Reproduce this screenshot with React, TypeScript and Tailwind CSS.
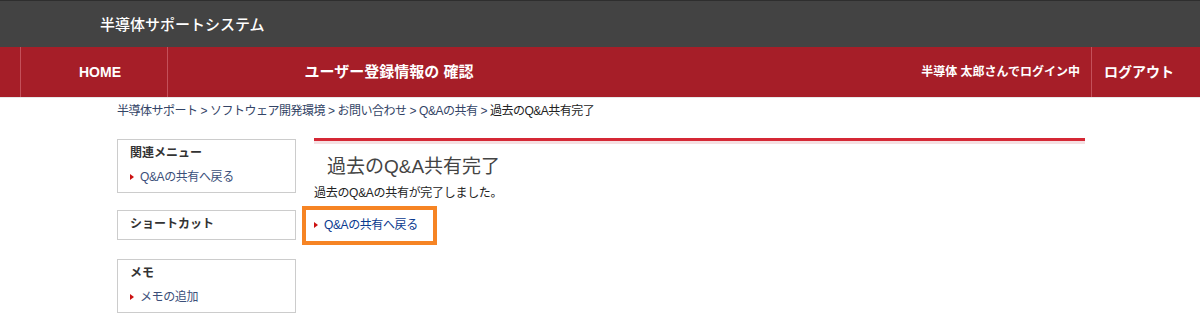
import React from 'react';

const Arrow = () => (
  <span className="inline-block w-0 h-0 border-l-[4px] border-l-[#cc1111] border-y-[3px] border-y-transparent mr-[6px] align-middle relative -top-[1px]" />
);

const SideBox = ({ title, links }: { title: string; links?: string[] }) => (
  <div className="border border-[#cccccc] bg-white px-[12px] pt-[4px] pb-[6px]">
    <div className="text-[12px] leading-[18px] font-bold text-[#333333]">{title}</div>
    {links?.map((l) => (
      <div key={l} className="mt-[6px] text-[12px] leading-[18px] tracking-[-0.4px] text-[#3b4f7a]">
        <Arrow />
        {l}
      </div>
    ))}
  </div>
);

const App = () => {
  const crumbs = ['半導体サポート', 'ソフトウェア開発環境', 'お問い合わせ', 'Q&Aの共有'];

  return (
    <div className="w-[1200px] min-h-[323px] bg-white font-['Liberation_Sans','Noto_Sans_CJK_JP',sans-serif]">
      <header className="h-[47px] bg-[#434343] border-t border-t-[#2e2e2e] flex items-center pl-[100px]">
        <span className="text-white text-[15px] leading-none font-medium">半導体サポートシステム</span>
      </header>

      <nav className="h-[51px] bg-[#a61e28] border-b border-b-[#e8e8e8] flex items-stretch pl-[20px] pr-[14px] text-white font-bold">
        <div className="w-[147px] border-l border-l-[#c4505a] flex items-center justify-center pl-[12px] text-[14px]">HOME</div>
        <div className="w-[443px] border-l border-l-[#c4505a] flex items-center justify-center text-[15px]">
          ユーザー登録情報の&nbsp;確認
        </div>
        <div className="flex-1 flex items-center justify-end pr-[11px] text-[12px]">半導体 太郎さんでログイン中</div>
        <div className="w-[95px] border-l border-l-[#c4505a] flex items-center justify-center text-[14px]">ログアウト</div>
      </nav>

      <div className="ml-[117px] w-[968px]">
        <div className="pt-[4px] text-[12px] leading-[18px] tracking-[-0.5px] text-[#334466]">
          {crumbs.map((c) => (
            <span key={c}>
              {c}
              <span className="mx-[3px]">&gt;</span>
            </span>
          ))}
          <span className="text-[#222222]">過去のQ&A共有完了</span>
        </div>

        <div className="flex items-start gap-[18px] mt-[18px]">
          <aside className="w-[179px] flex flex-col pt-[1px]">
            <SideBox title="関連メニュー" links={['Q&Aの共有へ戻る']} />
            <div className="mt-[17px]">
              <SideBox title="ショートカット" />
            </div>
            <div className="mt-[19px]">
              <SideBox title="メモ" links={['メモの追加']} />
            </div>
          </aside>

          <main className="flex-1">
            <div className="h-[3px] bg-[#d52835]" />
            <div className="h-[3px] bg-[#f5e0e2]" />
            <h1 className="mt-[10px] pl-[13px] text-[19px] leading-[26px] text-[#444444]">過去のQ&A共有完了</h1>
            <p className="mt-[4px] text-[12px] leading-[18px] tracking-[-0.3px] text-[#222222]">過去のQ&Aの共有が完了しました。</p>
            <div className="mt-[4px] -ml-[12px] w-[135px] border-[4px] border-[#f68424] pl-[8px] py-[6px]">
              <div className="text-[12px] leading-[19px] tracking-[-0.4px] text-[#0b3a8f]">
                <Arrow />
                Q&Aの共有へ戻る
              </div>
            </div>
          </main>
        </div>
      </div>
    </div>
  );
};

export default App;
